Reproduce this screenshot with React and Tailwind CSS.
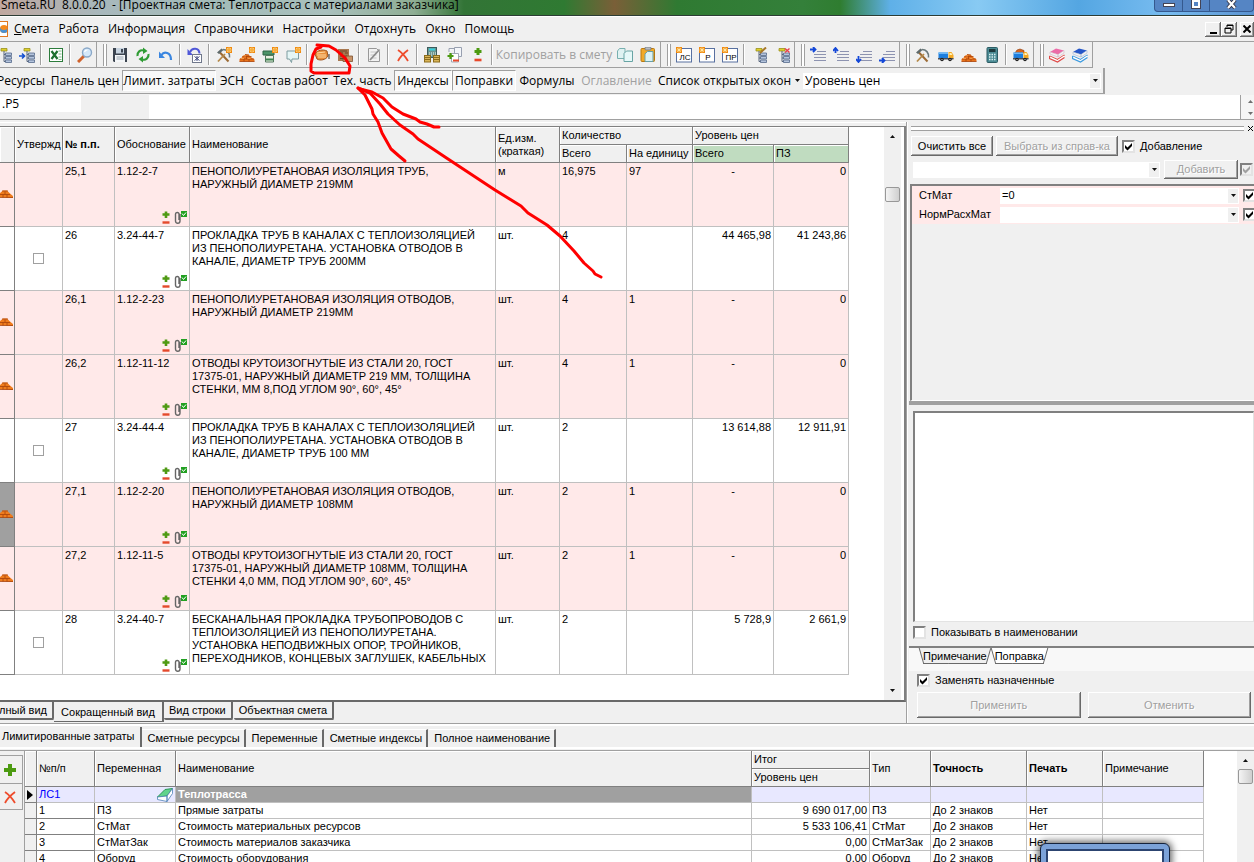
import React from 'react';
import clsx from 'clsx';

const menuItems = ['Работа', 'Информация', 'Справочники', 'Настройки', 'Отдохнуть', 'Окно', 'Помощь'];

const panelButtons = [
  { label: 'Ресурсы', width: 'w-[54px]' },
  { label: 'Панель цен', width: 'w-[74px]' },
  { label: 'Лимит. затраты', width: 'w-[94px]', pressed: true },
  { label: 'ЭСН', width: 'w-8' },
  { label: 'Состав работ', width: 'w-[83px]' },
  { label: 'Тех. часть', width: 'w-[63px]' },
  { label: 'Индексы', width: 'w-[58px]', pressed: true },
  { label: 'Поправки', width: 'w-16', pressed: true },
  { label: 'Формулы', width: 'w-[62px]' },
  { label: 'Оглавление', width: 'w-[77px]', disabled: true }
];

const rows = [
  { num: '25,1', code: '1.12-2-7', name: 'ПЕНОПОЛИУРЕТАНОВАЯ ИЗОЛЯЦИЯ ТРУБ,\nНАРУЖНЫЙ ДИАМЕТР 219ММ', unit: 'м', qty: '16,975', per: '97', total: '-', pz: '0', sub: true },
  { num: '26', code: '3.24-44-7', name: 'ПРОКЛАДКА ТРУБ В КАНАЛАХ С ТЕПЛОИЗОЛЯЦИЕЙ\nИЗ ПЕНОПОЛИУРЕТАНА. УСТАНОВКА ОТВОДОВ В\nКАНАЛЕ, ДИАМЕТР ТРУБ 200ММ', unit: 'шт.', qty: '4', per: '', total: '44 465,98', pz: '41 243,86' },
  { num: '26,1', code: '1.12-2-23', name: 'ПЕНОПОЛИУРЕТАНОВАЯ ИЗОЛЯЦИЯ ОТВОДОВ,\nНАРУЖНЫЙ ДИАМЕТР 219ММ', unit: 'шт.', qty: '4', per: '1', total: '-', pz: '0', sub: true },
  { num: '26,2', code: '1.12-11-12', name: 'ОТВОДЫ КРУТОИЗОГНУТЫЕ ИЗ СТАЛИ 20, ГОСТ\n17375-01, НАРУЖНЫЙ ДИАМЕТР 219 ММ, ТОЛЩИНА\nСТЕНКИ, ММ 8,ПОД УГЛОМ 90°, 60°, 45°', unit: 'шт.', qty: '4', per: '1', total: '-', pz: '0', sub: true },
  { num: '27', code: '3.24-44-4', name: 'ПРОКЛАДКА ТРУБ В КАНАЛАХ С ТЕПЛОИЗОЛЯЦИЕЙ\nИЗ ПЕНОПОЛИУРЕТАНА. УСТАНОВКА ОТВОДОВ В\nКАНАЛЕ, ДИАМЕТР ТРУБ 100 ММ', unit: 'шт.', qty: '2', per: '', total: '13 614,88', pz: '12 911,91' },
  { num: '27,1', code: '1.12-2-20', name: 'ПЕНОПОЛИУРЕТАНОВАЯ ИЗОЛЯЦИЯ ОТВОДОВ,\nНАРУЖНЫЙ ДИАМЕТР 108ММ', unit: 'шт.', qty: '2', per: '1', total: '-', pz: '0', sub: true, current: true },
  { num: '27,2', code: '1.12-11-5', name: 'ОТВОДЫ КРУТОИЗОГНУТЫЕ ИЗ СТАЛИ 20, ГОСТ\n17375-01, НАРУЖНЫЙ ДИАМЕТР 108ММ, ТОЛЩИНА\nСТЕНКИ 4,0 ММ, ПОД УГЛОМ 90°, 60°, 45°', unit: 'шт.', qty: '2', per: '1', total: '-', pz: '0', sub: true },
  { num: '28', code: '3.24-40-7', name: 'БЕСКАНАЛЬНАЯ ПРОКЛАДКА ТРУБОПРОВОДОВ С\nТЕПЛОИЗОЛЯЦИЕЙ ИЗ ПЕНОПОЛИУРЕТАНА.\nУСТАНОВКА НЕПОДВИЖНЫХ ОПОР, ТРОЙНИКОВ,\nПЕРЕХОДНИКОВ, КОНЦЕВЫХ ЗАГЛУШЕК, КАБЕЛЬНЫХ', unit: 'шт.', qty: '2', per: '', total: '5 728,9', pz: '2 661,9' }
];

const limits = [
  ['1', 'ПЗ', 'Прямые затраты', '9 690 017,00'],
  ['2', 'СтМат', 'Стоимость материальных ресурсов', '5 533 106,41'],
  ['3', 'СтМатЗак', 'Стоимость материалов заказчика', '0,00'],
  ['4', 'Оборуд', 'Стоимость оборудования', '0,00']
];

const Svg = ({ children, size = 16 }) => (
  <svg width={size} height={size} viewBox="0 0 16 16" fill="none" className="shrink-0">{children}</svg>
);

const Star = () => (
  <g>
    <rect x="10" y="0" width="6" height="6" fill="#f08a10" />
    <path d="M13 0.500v5M10.500 3h5M11.200 1.200l3.600 3.600M14.800 1.200l-3.600 3.600" stroke="#fff0b0" strokeWidth="0.8" />
    <circle cx="13" cy="3" r="1.100" fill="#f6a020" />
  </g>
);

const Tree = ({ children }) => (
  <Svg>
    <path d="M5 1.500h6v2.500H5z" fill="#ded02c" stroke="#99901c" strokeWidth="0.8" />
    <path d="M8 4v10.500h2M8 7.500h2M8 11h2" stroke="#56657c" />
    <path d="M9.500 6h6v2.500h-6zM9.500 9.500h6V12h-6zM9.500 13h6v2.500h-6z" fill="#b4c4dd" stroke="#566a8c" strokeWidth="0.8" />
    {children}
  </Svg>
);

const Bricks = ({ children }) => (
  <Svg>
    <path d="M0.500 14.500v-2.500l2-1 1-2 3-1.500 3.500 0.500 2.500 2.500 3 2v2z" fill="#e8731c" />
    <path d="M0.500 14.500h15M1 12h14M3.500 9.500h9M5 12v2.500M10 12v2.500M7.500 9.500V12M6 7.500l4 0.500" stroke="#a84108" strokeWidth="0.8" />
    <path d="M2 11.500h3M8.500 11.500h3M4.500 9h2.500" stroke="#ffb060" strokeWidth="0.7" />
    {children}
  </Svg>
);

const Hammers = ({ children }) => (
  <Svg>
    <path d="M3 4.500l9.500 10" stroke="#9c6a34" strokeWidth="2" />
    <path d="M1 5.500L5.500 1.500l2 1.500-4.500 4z" fill="#5e6a6c" />
    <path d="M2 14.500L9 7" stroke="#b48848" strokeWidth="1.800" />
    <path d="M7 2.500c4 0 7 3 6.500 8" stroke="#6b7a7c" strokeWidth="1.600" />
    {children}
  </Svg>
);

const Truck = ({ loaded }) => (
  <Svg>
    {loaded && <path d="M2 6l2-3 3-1 4 1.500V6z" fill="#d8641c" stroke="#8c3808" strokeWidth="0.6" />}
    <path d="M0.500 5.500h9.500v5.500H0.500z" fill="#1d7ede" />
    <path d="M0.500 5.500h9.500v1.500H0.500z" fill="#6bb8f8" />
    <path d="M10.500 5h3l2 3v4h-5z" fill="#f5a924" />
    <path d="M11.500 6h1.800l1.200 2h-3z" fill="#fff2b8" />
    <path d="M0 11h15.500v1.500H0z" fill="#484e58" />
    <circle cx="4" cy="12.500" r="1.800" fill="#222" />
    <circle cx="12" cy="12.500" r="1.800" fill="#222" />
    <circle cx="4" cy="12.500" r="0.600" fill="#ddd" />
    <circle cx="12" cy="12.500" r="0.600" fill="#ddd" />
  </Svg>
);

const Books = ({ top, edge, shade }) => (
  <Svg>
    <path d="M1 5l6-3.500 8 2-6 4z" fill={top} />
    <path d="M1 5v2l8 3V7.500zM9 7.500v2.500l6-4V3.500z" fill="#f4f4f6" stroke={shade} strokeWidth="0.5" />
    <path d="M0.500 9l8 3.500 7-4.500" stroke={edge} strokeWidth="1.200" />
    <path d="M1 9.500v1.500l7.500 3 6.500-4V8.500l-6.500 4.500z" fill="#fff" />
    <path d="M0.500 9v2.500l8 3.500 7-4.500" stroke={edge} strokeWidth="1.200" />
  </Svg>
);

const Outline = ({ children }) => (
  <Svg>
    <path d="M7 4.500h9M4 7.500h12M4 10.500h12M4 13.500h12" stroke="#8d93b0" />
    {children}
  </Svg>
);

const PlusMinus = () => (
  <Svg>
    <path d="M8 1v7M4.500 4.500h7" stroke="#4c9a10" strokeWidth="3" />
    <path d="M4.500 13h7" stroke="#e8482a" strokeWidth="2.600" />
  </Svg>
);

const Calc = () => (
  <Svg>
    <rect x="3" y="0.500" width="10.500" height="15" rx="1" fill="#4b8b94" stroke="#2c5c64" />
    <rect x="5" y="2" width="6.500" height="3" fill="#1e3a3e" />
    <path d="M5 7.500h7M5 10h7M5 12.500h7" stroke="#d8f0f0" strokeWidth="1.400" strokeDasharray="1.500 1" />
  </Svg>
);

const BadgeIcon = ({ text }) => (
  <Svg>
    <rect x="0.500" y="1.500" width="15" height="13.500" fill="#fff" stroke="#5870a0" />
    <rect x="0" y="0" width="6" height="6" fill="#f08a10" />
    <path d="M3 0.500v5M0.500 3h5M1.200 1.200l3.600 3.600M4.800 1.200L1.200 4.800" stroke="#fff0b0" strokeWidth="0.8" />
    <text x="9" y="13" textAnchor="middle" fontSize="8" fontFamily="Liberation Sans, sans-serif" fill="#000">{text}</text>
  </Svg>
);

const icons = {
  tree: <Tree />,
  treeArrow: <Tree><path d="M0 9h5M3 6.500L5.500 9 3 11.500" stroke="#1450d0" strokeWidth="1.600" /></Tree>,
  excel: (
    <Svg>
      <rect x="1.500" y="1.500" width="13" height="13" fill="#fff" stroke="#2c7c3c" />
      <path d="M10.500 4h3M10.500 7h3M10.500 10h3M10.500 12.500h3" stroke="#7cb888" />
      <path d="M3.500 4l6 8M9.500 4l-6 8" stroke="#1e7030" strokeWidth="2.200" />
    </Svg>
  ),
  search: (
    <Svg>
      <path d="M1 15l6-6" stroke="#d0622c" strokeWidth="3" />
      <circle cx="10" cy="5.500" r="4.500" fill="#d4e8fa" stroke="#8aa8c8" strokeWidth="1.400" />
      <path d="M7.500 5c0.500-1.500 1.500-2 3-2" stroke="#fff" strokeWidth="1.200" />
    </Svg>
  ),
  save: (
    <Svg>
      <path d="M1 1h14v14H2l-1-1z" fill="#3c4450" />
      <rect x="4" y="1" width="8" height="5.500" fill="#c8d4e0" />
      <rect x="9" y="2" width="2" height="3.500" fill="#3c4450" />
      <rect x="3" y="8" width="10" height="7" fill="#f4f6f8" />
      <path d="M4.500 10h7M4.500 12h7" stroke="#98a4b0" />
    </Svg>
  ),
  refresh: (
    <Svg>
      <path d="M2.500 9c-0.500-4 3-6.500 6-5.500M13.500 7c0.500 4-3 6.500-6 5.500" stroke="#2f9c34" strokeWidth="2.200" />
      <path d="M8 0.500l4.500 3.500-4.500 3zM8 15.500L3.500 12 8 9z" fill="#2f9c34" />
    </Svg>
  ),
  undo: (
    <Svg>
      <path d="M3.500 8c2.500-4 9.500-3 9.500 5" stroke="#3a86e0" strokeWidth="2.200" />
      <path d="M1 4.500V11h6z" fill="#3a86e0" />
    </Svg>
  ),
  undoDoc: (
    <Svg>
      <path d="M3 5c2-4.500 9-4.500 9.500 1.500" stroke="#5058d8" strokeWidth="2" />
      <path d="M0.500 2v6H6z" fill="#5058d8" />
      <rect x="5.500" y="7.500" width="9" height="8" fill="#fff" stroke="#70788c" />
      <path d="M7.500 9.500l5 4M12.500 9.500l-5 4M10 9v5" stroke="#404a80" />
    </Svg>
  ),
  hammersNew: <Hammers><Star /></Hammers>,
  bricksNew: <Bricks><Star /></Bricks>,
  machineNew: (
    <Svg>
      <path d="M1 4h11v4H1z" fill="#4c9468" stroke="#2c6444" />
      <path d="M3.500 8.500h8v6.500h-8z" fill="#e8f0e0" stroke="#50785c" />
      <path d="M4 12.500h7" stroke="#3c8450" strokeWidth="2" />
      <Star />
    </Svg>
  ),
  commentNew: (
    <Svg>
      <path d="M2 4h11.500v8H7l-0.500 3.500L4.500 12H2z" fill="#e4f6f6" stroke="#7c9ca0" />
      <Star />
    </Svg>
  ),
  hand: (
    <Svg>
      <path d="M1 7c2-4 8-5 12-3l1 5c-2 4-8 5-11 3z" fill="#e8903c" stroke="#a0541c" />
      <path d="M3 6l8-1M3 8h9M4 10h8" stroke="#ffd8a0" strokeWidth="1.200" />
      <path d="M15 7v5" stroke="#333" />
    </Svg>
  ),
  bricksWall: (
    <Svg>
      <rect x="1" y="2" width="11" height="12" fill="#a87850" />
      <path d="M3 4h7M3 6h3M8 6h3M3 9h7M3 11.500h5" stroke="#6c4428" />
      <path d="M9 9h6.500v5.500H6V12h3z" fill="#c89468" stroke="#7c5030" strokeWidth="0.8" />
    </Svg>
  ),
  edit: (
    <Svg>
      <path d="M2.500 1.500h8l3 3v10h-11z" fill="#f2f2f2" stroke="#989898" />
      <path d="M4.500 5h6M4.500 8h6M4.500 11h6" stroke="#c4c4c4" />
      <path d="M4 13L13.500 2.500" stroke="#8c8c8c" strokeWidth="1.800" />
    </Svg>
  ),
  cross: (
    <Svg>
      <path d="M3 3c3 2 7 6 10 11M13 3C9 6 5 10 3 14" stroke="#ee4c2c" strokeWidth="1.800" />
    </Svg>
  ),
  calcMoney: (
    <Svg>
      <rect x="3.500" y="0.500" width="9" height="10" fill="#6c9490" stroke="#3c5c5c" />
      <path d="M5 2.500h6" stroke="#38d0dc" strokeWidth="2" />
      <path d="M5 6h7M5 8h7" stroke="#f0f8f0" strokeDasharray="1 1" />
      <rect x="0.500" y="8.500" width="6" height="6.500" fill="#d8b458" stroke="#8c6c1c" />
      <rect x="9.500" y="8.500" width="6" height="6.500" fill="#d8b458" stroke="#8c6c1c" />
      <path d="M1 10.500h5M1 12.500h5M10 10.500h5M10 12.500h5" stroke="#8c6c1c" />
    </Svg>
  ),
  docPlus: (
    <Svg>
      <path d="M2 5V1.500h5M7.500 0.500h7v9h-7z" fill="#f4f6fa" stroke="#98a0b0" />
      <path d="M4.500 6.500h7v8.500h-7z" fill="#fff" stroke="#a0a8b4" />
      <path d="M3.500 6v6M0.500 9h6" stroke="#4c9a10" strokeWidth="2.200" />
      <path d="M6 13.500h6" stroke="#e8482a" strokeWidth="2" />
    </Svg>
  ),
  plusMinus: <PlusMinus />,
  copy: (
    <Svg>
      <path d="M0.500 4l2-2.500h5.500v10H0.500z" fill="#dff2f2" stroke="#78b0b0" />
      <path d="M7 6.500L9.500 4h6v10.500H7z" fill="#e6f8f8" stroke="#68a4a4" />
    </Svg>
  ),
  paste: (
    <Svg>
      <rect x="1" y="1.500" width="13.500" height="13" rx="1" fill="#f0aa28" stroke="#b87810" />
      <rect x="5" y="0" width="6" height="3" rx="1" fill="#b8bcc0" stroke="#70747c" strokeWidth="0.8" />
      <path d="M5 7l2.500-2.500h5.500v10H5z" fill="#dcf2f4" stroke="#68a0a8" />
    </Svg>
  ),
  ls: <BadgeIcon text="ЛС" />,
  r: <BadgeIcon text="Р" />,
  pr: <BadgeIcon text="ПР" />,
  treeEdit: <Tree><path d="M9 6l6-5.500" stroke="#a87828" strokeWidth="2" /></Tree>,
  treeDelete: <Tree><path d="M11 1.500l4.500 4M15.500 1.500l-4.500 4" stroke="#e8404c" strokeWidth="1.400" /></Tree>,
  right1: <Outline><path d="M0 2.500h5M3 0l2.500 2.500L3 5" stroke="#1448d8" strokeWidth="1.800" /></Outline>,
  up: <Outline><path d="M2.500 6V2M0 4l2.500-3L5 4" stroke="#1448d8" strokeWidth="1.800" /></Outline>,
  down: <Outline><path d="M2.500 9v5M0 12l2.500 3L5 12" stroke="#1448d8" strokeWidth="1.800" /></Outline>,
  right2: <Outline><path d="M0 13.500h5M3 11l2.500 2.500L3 16" stroke="#1448d8" strokeWidth="1.800" /></Outline>,
  hammers: <Hammers />,
  truck: <Truck />,
  bricks: <Bricks />,
  calc: <Calc />,
  truckLoaded: <Truck loaded />,
  booksRed: <Books top="#ec6ca8" edge="#e04a48" shade="#c8a8b8" />,
  booksBlue: <Books top="#2456c8" edge="#3a9ae0" shade="#90a8c8" />
};

const toolGroups = [
  ['tree', 'treeArrow', '|', 'excel', '|', 'search'],
  ['save', 'refresh', 'undo', '|', 'undoDoc', '|', 'hammersNew', 'bricksNew', 'machineNew', 'commentNew', '|', 'hand', 'bricksWall', '|', 'edit', '|', 'cross', '|', 'calcMoney', 'docPlus', 'plusMinus', '|', 'copyText', 'copy', 'paste'],
  ['ls', 'r', 'pr', '|', 'treeEdit', 'treeDelete'],
  ['right1', 'up', 'down', 'right2'],
  ['hammers', 'truck', 'bricks', 'calc', '|', 'truckLoaded'],
  ['booksRed', 'booksBlue']
];

const ToolItem = ({ id }) => {
  if (id === '|') {
    return <span className="mx-[2px] h-[21px] w-[2px] border-l border-[#a0a0a0] bg-white" />;
  }
  if (id === 'copyText') {
    return (
      <button disabled className="w-[118px] whitespace-nowrap text-center text-[12px] text-[#a0a0a0]">
        Копировать в смету
      </button>
    );
  }
  return (
    <button aria-label={id} className="flex h-[22px] w-[23px] shrink-0 items-center justify-center">
      {icons[id]}
    </button>
  );
};

const Arrow = ({ up }) => (
  <svg width="5" height="3" viewBox="0 0 5 3" className="shrink-0">
    <path d={up ? 'M0 3h5L2.500 0z' : 'M0 0h5L2.500 3z'} fill="#111" />
  </svg>
);

const CheckBox = ({ label, checked, disabled, className }) => (
  <label className={clsx('flex items-center gap-[5px]', className)}>
    <span className="relative flex size-[13px] shrink-0">
      <input
        type="checkbox"
        defaultChecked={checked}
        disabled={disabled}
        aria-label={label ? undefined : 'Отметить'}
        className="size-[13px] appearance-none border-2 border-t-[#808080] border-r-[#e3e3e3] border-b-[#e3e3e3] border-l-[#808080] bg-white disabled:bg-[#f0f0f0]"
      />
      {checked && (
        <svg viewBox="0 0 13 13" className="pointer-events-none absolute inset-0">
          <path d="M3 5v3l2.500 2.500L10 6V3L5.500 7.500z" fill={disabled ? '#a0a0a0' : '#000'} />
        </svg>
      )}
    </span>
    {label && <span className="whitespace-nowrap">{label}</span>}
  </label>
);

const Button = ({ children, className, disabled, label }) => (
  <button
    disabled={disabled}
    aria-label={label}
    className={clsx(
      'whitespace-nowrap bg-[#f0f0f0] text-center shadow-[inset_-1px_-1px_#696969,inset_1px_1px_#fff,inset_-2px_-2px_#a0a0a0] disabled:text-[#a0a0a0] disabled:text-shadow-[1px_1px_#fff]',
      className
    )}
  >
    {children}
  </button>
);

const Combo = ({ value, label, className }) => (
  <div className={clsx('relative flex h-4 min-w-0 flex-1 bg-white', className)}>
    <select aria-label={label} className="w-full appearance-none bg-white px-[2px] text-black outline-none">
      <option>{value}</option>
    </select>
    <span className="pointer-events-none absolute inset-y-px right-px flex w-[10px] items-center justify-center bg-[#f0f0f0]">
      <Arrow />
    </span>
  </div>
);

const ScrollBar = ({ thumb, down }) => (
  <div className="flex w-[17px] shrink-0 flex-col items-center bg-[#f0f0f0] py-2">
    <Arrow up />
    <div className={clsx('h-[15px] w-[15px] rounded-[2px] border border-[#989898] bg-linear-to-r from-[#f4f4f4] to-[#cfcfcf]', thumb)} />
    {down && <span className="mt-auto"><Arrow /></span>}
  </div>
);

const RowMarks = () => (
  <span className="flex items-center justify-end gap-1 pr-[2px] pb-[2px]">
    <svg width="8" height="13" viewBox="0 0 8 13">
      <path d="M4 0.500v6.500M0.500 3.500h7" stroke="#4f9a14" strokeWidth="2.600" />
      <path d="M0.500 11.500h7" stroke="#e4492c" strokeWidth="2.400" />
    </svg>
    <svg width="13" height="13" viewBox="0 0 13 13" fill="none">
      <path d="M6 3v7c0 3-4.500 3-4.500 0V3c0-2 3-2 3.500-0.500V9" stroke="#666" strokeWidth="1.400" />
      <rect x="7" y="0" width="6" height="6" fill="#22a022" />
      <path d="M8 2.500L9.500 4.500 12 1.500" stroke="#fff" />
    </svg>
  </span>
);

const TitleBar = () => (
  <header className="flex h-[17px] items-start justify-between overflow-hidden border-b border-white bg-[linear-gradient(90deg,#c0a8a0_0%,#a8b8bc_8%,#a3bcb8_18%,#a9c0bd_26%,#8fae94_33%,#327436_37%,#2f7a32_45%,#7a5f38_49%,#2f7a32_54%,#34803a_64%,#2f7d30_67%,#5fb0e8_71%,#88caf3_78%,#54a6e2_86%,#78bcf0_93%,#5a92d0_100%)] shadow-[inset_0_-1px_#2c3c34]">
    <h1 className="-mt-[3px] whitespace-pre pl-px text-[12px] leading-4">Smeta.RU  8.0.0.20  - [Проектная смета: Теплотрасса с материалами заказчика]</h1>
    <div className="flex h-3 rounded-b-[4px] border border-t-0 border-[#35598e] bg-[#5585c4]">
      <button aria-label="Свернуть окно" className="flex w-7 justify-center border-r border-[#35598e] pt-[3px]"><span className="h-1 w-3 border border-[#445] bg-white" /></button>
      <button aria-label="Развернуть окно" className="flex w-[27px] justify-center border-r border-[#35598e]"><span className="size-2 border-2 border-white outline outline-[#445]" /></button>
      <button aria-label="Закрыть окно" className="flex w-[43px] justify-center">
        <svg width="11" height="9" viewBox="0 0 11 9"><path d="M2 0l7 8M9 0L2 8" stroke="#334" strokeWidth="4" /><path d="M2 0l7 8M9 0L2 8" stroke="#fff" strokeWidth="2.200" /></svg>
      </button>
    </div>
  </header>
);

const MenuBar = () => (
  <nav className="flex h-6 items-center justify-between text-[12px]">
    <div className="flex items-center gap-[9px]">
      <div className="-mr-[3px] flex h-4 w-2 items-center justify-center overflow-hidden border border-l-0 border-[#e07820] bg-white">
        <span className="size-2 shrink-0 rounded-full bg-[#f58a1c] shadow-[inset_0_-3px_#4a90d0]" />
      </div>
      <a href="#" className="text-black"><span className="underline">С</span>мета</a>
      {menuItems.map((item) => (
        <a key={item} href="#" className="text-black">{item}</a>
      ))}
    </div>
    <div className="flex">
      <Button label="Свернуть" className="flex h-[15px] w-4 items-end justify-center pb-[3px]"><span className="h-[2px] w-[7px] bg-black" /></Button>
      <Button label="Восстановить" className="flex h-[15px] w-4 items-center justify-center">
        <svg width="10" height="10" viewBox="0 0 10 10" fill="none"><path d="M3 3V1h6v5H7M1 4h6v5H1zM3 1.500h6M1 4.500h6" stroke="#000" /></svg>
      </Button>
      <Button label="Закрыть" className="ml-[3px] flex h-[15px] w-[14px] items-center justify-center">
        <svg width="8" height="8" viewBox="0 0 8 8"><path d="M0.500 0.500l7 7M7.500 0.500l-7 7" stroke="#000" strokeWidth="2" /></svg>
      </Button>
    </div>
  </nav>
);

const ToolBars = () => (
  <div>
    <div className="flex border-t border-[#a0a0a0]">
      <div className="flex h-[26px] items-center border-b border-[#a0a0a0]">
        {toolGroups.map((group, i) => (
          <div key={i} className={clsx('flex h-full items-center border-r border-[#a0a0a0]', i === 0 ? '-ml-2' : 'pr-px pl-[6px]')}>
            {i > 0 && <span className="mr-px h-[22px] w-1 border-x border-[#a0a0a0] bg-white" />}
            {group.map((id, j) => <ToolItem key={j} id={id} />)}
          </div>
        ))}
      </div>
    </div>
    <div className="flex">
      <div className="flex h-[26px] items-center border-r-2 border-b border-[#a0a0a0] pr-[2px] text-[12px]">
        {panelButtons.map((b, i) => (
          <button
            key={b.label}
            disabled={b.disabled}
            className={clsx(
              'flex h-[21px] shrink-0 items-center justify-center whitespace-nowrap disabled:text-[#a0a0a0]',
              b.width,
              i === 0 && '-ml-[6px]',
              b.pressed && 'border border-t-[#a0a0a0] border-r-white border-b-white border-l-[#a0a0a0] bg-[#f8f8f8]'
            )}
          >
            {b.label}
          </button>
        ))}
        <button className="flex w-[148px] shrink-0 items-center justify-center gap-1 whitespace-nowrap">
          Список открытых окон <Arrow />
        </button>
        <div className="flex w-[298px]"><Combo label="Уровень цен" value="Уровень цен" /></div>
      </div>
    </div>
    <div className="flex h-[26px] border-t border-b border-t-[#f0f0f0] border-b-[#a0a0a0] bg-white">
      <div className="w-[149px] bg-[#f0f0f0]">
        <input aria-label="Ячейка" defaultValue=".Р5" className="block h-[17px] w-[81px] bg-white pl-[2px] text-[12px] leading-4 outline-none" />
      </div>
      <div className="flex-1 border-r border-[#a0a0a0]" />
      <div className="flex w-[13px] flex-col items-end justify-around bg-[#f0f0f0] pr-px opacity-60"><Arrow up /><Arrow /></div>
    </div>
  </div>
);

const th = 'overflow-hidden whitespace-nowrap border-r border-b border-[#808080] px-[2px] text-left align-middle shadow-[inset_1px_1px_#fff]';
const thPlain = `${th} font-normal`;
const td = 'overflow-hidden whitespace-pre border-r border-b border-[#c0c0c0] px-[2px] pt-[2px] align-top';

const EstimateTable = () => (
  <table className="w-full table-fixed border-separate border-spacing-0">
    <colgroup>
      <col className="w-[15px]" />
      <col className="w-12" />
      <col className="w-[52px]" />
      <col className="w-[75px]" />
      <col />
      <col className="w-16" />
      <col className="w-[67px]" />
      <col className="w-[66px]" />
      <col className="w-[81px]" />
      <col className="w-[75px]" />
    </colgroup>
    <thead className="bg-[#f0f0f0]">
      <tr className="h-[18px]">
        <th rowSpan={2} className={thPlain} />
        <th rowSpan={2} className={thPlain}>Утвержд</th>
        <th rowSpan={2} className={clsx(th, 'font-bold')}>№ п.п.</th>
        <th rowSpan={2} className={thPlain}>Обоснование</th>
        <th rowSpan={2} className={thPlain}>Наименование</th>
        <th rowSpan={2} className={thPlain}>Ед.изм.<br />(краткая)</th>
        <th colSpan={2} className={thPlain}>Количество</th>
        <th colSpan={2} className={thPlain}>Уровень цен</th>
      </tr>
      <tr className="h-[18px]">
        <th className={thPlain}>Всего</th>
        <th className={thPlain}>На единицу</th>
        <th className={clsx(thPlain, 'bg-[#c0dcc0]')}>Всего</th>
        <th className={clsx(thPlain, 'bg-[#c0dcc0]')}>ПЗ</th>
      </tr>
    </thead>
    <tbody>
      {rows.map((row) => (
        <tr key={row.num} className={clsx('h-16', row.sub ? 'bg-[#ffe9e9]' : 'bg-white')}>
          <td className={clsx('overflow-hidden border-r border-b border-[#808080] align-middle', row.current && 'bg-[#a0a0a0]')}>
            {row.sub && (
              <svg width="13" height="9" viewBox="0 0 13 9" className="block">
                <path d="M0 7V3l3-2.500h4l3 3 3 2.500v2z" fill="#ef7c1e" />
                <path d="M0 7.500h13M0 4.500h10M3 4.500v3M7 4.500v3M5 1.500v3M2 1h6" stroke="#a8420a" strokeWidth="0.8" fill="none" />
              </svg>
            )}
          </td>
          <td className="border-r border-b border-[#c0c0c0] text-center align-middle">
            {!row.sub && <input type="checkbox" aria-label={`Утвердить ${row.num}`} className="mx-auto block size-[11px] appearance-none border border-[#a0a0a0] bg-white" />}
          </td>
          <td className={td}>{row.num}</td>
          <td className="border-r border-b border-[#c0c0c0] pt-[2px] align-top whitespace-nowrap">
            <div className="flex h-[61px] flex-col justify-between">
              <span className="pl-[2px]">{row.code}</span>
              <RowMarks />
            </div>
          </td>
          <td className={td}>{row.name}</td>
          <td className={td}>{row.unit}</td>
          <td className={td}>{row.qty}</td>
          <td className={td}>{row.per}</td>
          <td className={clsx(td, row.sub ? 'text-center' : 'text-right')}>{row.total}</td>
          <td className={clsx(td, 'text-right')}>{row.pz}</td>
        </tr>
      ))}
    </tbody>
  </table>
);

const viewTabs = ['Вид строки', 'Объектная смета'];

const viewTab = 'h-[18px] whitespace-nowrap rounded-b-[2px] border-r-2 border-b-2 border-[#696969] px-[5px]';

const SlantTab = ({ children, active }) => (
  <button
    className={clsx(
      'relative z-0 h-4 px-[6px]',
      'before:absolute before:inset-y-0 before:left-1 before:-z-10 before:w-1/2 before:skew-x-[16deg] before:border-b before:border-l before:border-[#696969]',
      'after:absolute after:inset-y-0 after:right-1 after:-z-10 after:w-1/2 after:-skew-x-[16deg] after:border-r after:border-b after:border-[#696969]',
      active ? 'before:bg-[#f0f0f0] after:bg-[#f0f0f0]' : 'before:bg-white after:bg-white'
    )}
  >
    {children}
  </button>
);

const ParamRow = ({ label, value }) => (
  <div className="flex h-[19px] items-center bg-[#ffe9e9]">
    <span className="w-[88px] shrink-0 pl-[7px]">{label}</span>
    <Combo label={label} value={value} className="mr-1" />
    <CheckBox checked className="w-[11px] overflow-hidden" />
  </div>
);

const SidePanel = () => (
  <aside className="flex w-[348px] shrink-0 flex-col border-l border-[#a0a0a0] pl-1 shadow-[inset_1px_0_#fff]">
    <div className="mt-[2px] flex items-center justify-between">
      <div className="flex h-[5px] flex-1 flex-col justify-between border-y border-[#a0a0a0] bg-white" />
      <button aria-label="Закрыть панель" className="ml-1 h-[9px] w-[6px] overflow-hidden">
        <svg width="6" height="7" viewBox="0 0 6 7"><path d="M0 1l5 5M5 1L0 6" stroke="#000" /></svg>
      </button>
    </div>
    <div className="mt-[3px] flex items-center">
      <Button className="h-5 w-[82px]">Очистить все</Button>
      <Button disabled className="ml-[3px] h-5 w-[122px]">Выбрать из справ-ка</Button>
      <CheckBox checked label="Добавление" className="ml-1" />
    </div>
    <div className="mt-1 flex items-center">
      <Combo label="Переменная" value="" className="ml-[2px]" />
      <Button disabled className="ml-1 h-[19px] w-[74px]">Добавить</Button>
      <CheckBox checked disabled className="mr-px ml-[2px]" />
    </div>
    <div className="-ml-px mt-[5px] h-[217px] border-t-2 border-b border-l-2 border-t-[#808080] border-b-white border-l-[#808080]">
      <ParamRow label="СтМат" value="=0" />
      <ParamRow label="НормРасхМат" value="" />
    </div>
    <div className="-ml-[2px] h-1 shrink-0 bg-[#a0a0a0]" />
    <textarea aria-label="Текст примечания" className="mt-[6px] ml-[2px] min-h-0 flex-1 resize-none border-t-2 border-r border-b border-l-2 border-t-[#808080] border-r-[#e3e3e3] border-b-[#e3e3e3] border-l-[#808080] bg-white outline-none" />
    <CheckBox label="Показывать в наименовании" className="mt-1 ml-[2px]" />
    <div className="-ml-[2px] mt-[7px] flex h-[25px] items-start border-t-2 border-[#808080] bg-[#f8f8f8] pl-2">
      <SlantTab active>Примечание</SlantTab>
      <span className="-ml-1 flex"><SlantTab>Поправка</SlantTab></span>
    </div>
    <CheckBox checked label="Заменять назначенные" className="mt-[3px] ml-[6px]" />
    <div className="mt-[5px] mr-[3px] mb-[5px] ml-[6px] flex gap-[7px]">
      <Button disabled className="h-[26px] flex-1">Применить</Button>
      <Button disabled className="h-[26px] flex-1">Отменить</Button>
    </div>
  </aside>
);

const lowerTabs = ['Сметные ресурсы', 'Переменные', 'Сметные индексы', 'Полное наименование'];

const LimitsPane = () => {
  const cell = 'overflow-hidden whitespace-nowrap border-r border-b border-[#c0c0c0] px-[2px]';
  return (
    <section className="flex min-h-0 flex-1 flex-col border-t border-[#a0a0a0] pt-[3px] shadow-[inset_0_2px_#fff]">
      <div className="flex items-end border-b-2 border-white">
        <button className="h-5 whitespace-nowrap border-r-2 border-[#696969] pr-[6px] pb-[2px] pl-[2px]">Лимитированные затраты</button>
        {lowerTabs.map((tab) => (
          <button key={tab} className="mr-px h-[18px] whitespace-nowrap border-t border-r-2 border-t-white border-r-[#696969] pr-1 pl-[5px]">{tab}</button>
        ))}
      </div>
      <div className="mt-px flex min-h-0 flex-1 overflow-hidden border-t border-[#a0a0a0]">
        <div className="mr-px w-[23px] shrink-0">
          <div className="mt-1 h-[55px] border-t border-r border-b border-[#a0a0a0]">
            <button aria-label="Добавить строку" className="flex h-[27px] w-full items-center pl-[3px]">
              <svg width="14" height="14" viewBox="0 0 14 14"><path d="M7 1v12M1 7h12" stroke="#4c9a10" strokeWidth="4" /></svg>
            </button>
            <button aria-label="Удалить строку" className="flex h-[26px] w-full items-center border-t border-[#a0a0a0] pl-[2px]">{icons.cross}</button>
          </div>
        </div>
        <div className="flex min-w-0 flex-1 items-start border-l border-[#a0a0a0] bg-white pr-[33px]">
          <table className="w-full table-fixed border-separate border-spacing-0">
            <colgroup>
              <col className="w-3" />
              <col className="w-[58px]" />
              <col className="w-[81px]" />
              <col />
              <col className="w-[118px]" />
              <col className="w-[61px]" />
              <col className="w-24" />
              <col className="w-[76px]" />
              <col className="w-[101px]" />
            </colgroup>
            <thead className="bg-[#f0f0f0]">
              <tr className="h-[18px]">
                <th rowSpan={2} className={thPlain} />
                <th rowSpan={2} className={thPlain}>№п/п</th>
                <th rowSpan={2} className={thPlain}>Переменная</th>
                <th rowSpan={2} className={thPlain}>Наименование</th>
                <th className={thPlain}>Итог</th>
                <th rowSpan={2} className={thPlain}>Тип</th>
                <th rowSpan={2} className={clsx(th, 'font-bold')}>Точность</th>
                <th rowSpan={2} className={clsx(th, 'font-bold')}>Печать</th>
                <th rowSpan={2} className={thPlain}>Примечание</th>
              </tr>
              <tr className="h-[18px]">
                <th className={thPlain}>Уровень цен</th>
              </tr>
            </thead>
            <tbody>
              <tr className="h-4 bg-[#e8e8ff]">
                <td className="border-r border-b border-[#808080] bg-[#f0f0f0] pl-[2px]">
                  <svg width="7" height="10" viewBox="0 0 7 10" className="block"><path d="M0 0l6 5-6 5z" fill="#000" /></svg>
                </td>
                <td className={clsx(cell, 'text-[#0000ff]')}>ЛС1</td>
                <td className={cell}>
                  <svg width="16" height="14" viewBox="0 0 16 14" className="ml-auto block">
                    <path d="M0.500 9L8 1.500 15.500 0.500 10 8z" fill="#62d48c" stroke="#2c9858" />
                    <path d="M0.500 9v2.500l9.500 2V8zM10 8v5.500l5.500-8v-5z" fill="#fff" stroke="#4c80b8" strokeWidth="0.8" />
                  </svg>
                </td>
                <td className={clsx(cell, 'bg-[#a0a0a0] font-bold text-white')}>Теплотрасса</td>
                <td className={cell} />
                <td className={cell} />
                <td className={cell} />
                <td className={cell} />
                <td className={cell} />
              </tr>
              {limits.map(([num, variable, name, total]) => (
                <tr key={num} className="h-4">
                  <td className="border-r border-b border-[#808080] bg-[#f0f0f0]" />
                  <td className="overflow-hidden whitespace-nowrap border-r border-b border-[#808080] px-[2px]">{num}</td>
                  <td className={cell}>{variable}</td>
                  <td className={cell}>{name}</td>
                  <td className={clsx(cell, 'text-right')}>{total}</td>
                  <td className={cell}>{variable}</td>
                  <td className={cell}>До 2 знаков</td>
                  <td className={cell}>Нет</td>
                  <td className={cell} />
                </tr>
              ))}
            </tbody>
          </table>
        </div>
        <ScrollBar thumb="mt-[7px]" />
      </div>
    </section>
  );
};

// hand-drawn red marks over the toolbar and the table
const Marks = () => (
  <svg width="620" height="290" viewBox="0 0 620 290" fill="none" stroke="#ff0000" strokeWidth="3" strokeLinecap="round" strokeLinejoin="round" className="pointer-events-none absolute top-0 left-0">
    <path d="M321 47L316 49 313 55 311 64 311 71 314 73 349 73 350 66 345 58 336 50 329 46 317 45" />
    <path d="M358 88L365 95 372 109 373 114 378 122 382 133 391 149 399 156 405 161" />
    <path d="M358 88L370 93 380 104 388 114 400 125 413 134 418 139 445 157 495 190 521 206 528 213 547 225 560 236 574 251 584 263 593 271 595 274 601 277" />
    <path d="M360 89L372 92 383 98 392 107 403 114 416 119 420 122 427 124 434 127 439 127" />
  </svg>
);

export default function App() {
  return (
    <div className="relative flex h-screen flex-col overflow-hidden bg-[#f0f0f0] font-['Liberation_Sans',sans-serif] text-[11px] leading-[13px] text-black">
      <div className="shrink-0 font-['Open_Sans',sans-serif] leading-4">
        <TitleBar />
        <MenuBar />
        <ToolBars />
      </div>
      <main className="flex shrink-0 pt-[2px]">
        <div className="flex min-w-0 flex-1 flex-col border-t border-white">
          <div className="mt-[3px] flex border-t border-r-2 border-b-2 border-t-[#808080] border-r-[#808080] border-b-[#696969] bg-white">
            <div className="min-w-0 flex-1 pr-[35px] pb-[25px]"><EstimateTable /></div>
            <div className="mr-[3px] flex"><ScrollBar thumb="mt-[49px]" down /></div>
          </div>
          <div className="flex h-[21px] items-start">
            <div className="flex w-[54px] justify-end"><button className={viewTab}>Полный вид</button></div>
            <button className="h-5 w-[110px] whitespace-nowrap border-r-2 border-b border-[#696969] pt-[2px]">Сокращенный вид</button>
            {viewTabs.map((tab) => (
              <button key={tab} className={clsx(viewTab, 'mr-px')}>{tab}</button>
            ))}
          </div>
        </div>
        <SidePanel />
      </main>
      <LimitsPane />
      <div className="absolute right-[84px] -bottom-2 h-[27px] w-[130px] rounded-[6px] border border-[#15233c] bg-[#7ba2d8] p-[5px] shadow-[0_0_7px_2px_rgba(0,0,0,0.6)]">
        <div className="h-full border-2 border-[#2c4470] bg-white" />
      </div>
      <Marks />
    </div>
  );
}
